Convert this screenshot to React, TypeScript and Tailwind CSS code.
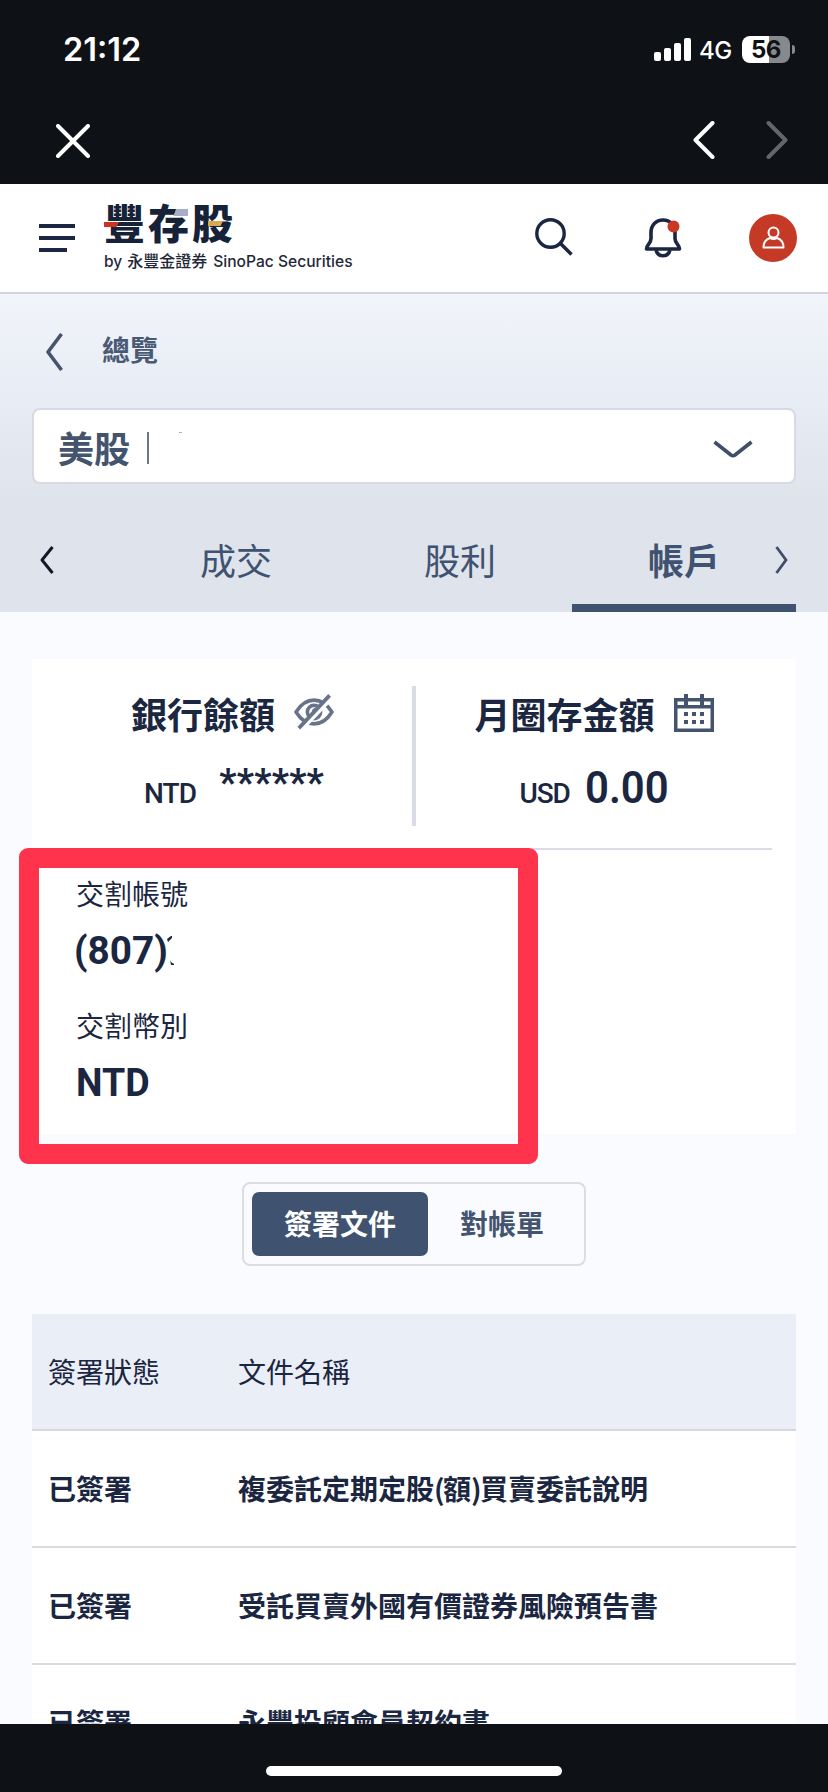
import type { ReactNode } from 'react';

const documents = [
  '複委託定期定股(額)買賣委託說明',
  '受託買賣外國有價證券風險預告書',
  '永豐投顧會員契約書',
];

const StatusBar = () => {
  return (
    <div className="h-[92px] flex items-start justify-between pl-[63px] pr-[33px]">
      <span className="mt-[30px] text-[32.5px] leading-[40px] font-semibold font-['Inter',sans-serif] text-white">21:12</span>
      <div className="mt-[36px] flex items-start">
        <svg width="38" height="27" viewBox="0 0 38 27" fill="#fff" className="mr-[7px]">
          <rect x="0" y="16" width="7" height="9" rx="2" />
          <rect x="10" y="12" width="7" height="13" rx="2" />
          <rect x="20" y="7" width="7" height="18" rx="2" />
          <rect x="30" y="2" width="7" height="23" rx="2" />
        </svg>
        <span className="w-[43px] text-[24px] leading-[30px] font-medium font-['Inter',sans-serif] text-white tracking-[-0.5px]">4G</span>
        <div className="w-[48px] h-[27px] rounded-[8px] bg-[linear-gradient(90deg,#fff_27px,#87898d_27px)] flex items-center justify-center">
          <span className="text-[24px] leading-[27px] font-bold font-['Inter',sans-serif] text-[#0e1116] tracking-[-0.5px]">56</span>
        </div>
        <div className="ml-[2px] mt-[9px] w-[3px] h-[9px] rounded-r-full bg-[#87898d]" />
      </div>
    </div>
  );
};

const BrowserBar = () => {
  return (
    <div className="h-[92px] flex items-start justify-between pl-[56px] pr-[40px]">
      <svg width="34" height="34" viewBox="0 0 34 34" className="mt-[32px]" stroke="#fff" strokeWidth="4" strokeLinecap="round">
        <path d="M2 2l30 30M32 2L2 32" />
      </svg>
      <div className="mt-[29px] flex gap-[51px]">
        <svg width="22" height="38" viewBox="0 0 22 38" fill="none" stroke="#fff" strokeWidth="4" strokeLinecap="round" strokeLinejoin="round">
          <path d="M19.500 2L2.500 19l17 17" />
        </svg>
        <svg width="22" height="38" viewBox="0 0 22 38" fill="none" stroke="#64666a" strokeWidth="4" strokeLinecap="round" strokeLinejoin="round">
          <path d="M2.500 2l17 17l-17 17" />
        </svg>
      </div>
    </div>
  );
};

const Logo = () => {
  return (
    <div className="ml-[29px] mt-[13px] w-[260px]">
      <div className="relative h-[48px] whitespace-nowrap text-[41px] leading-[48px] font-black tracking-[3px] text-[#152238]">
        豐存股
        {/* colour accents over the strokes */}
        <svg width="130" height="48" viewBox="0 0 130 48" className="absolute left-0 top-0">
          <path d="M0 25h15l-2.500 5H0z" fill="#cb3327" />
          <path d="M72 12H84v7H69.500z" fill="#a9aec8" />
          <path d="M104 24h15l-2.500 5h-12.500z" fill="#d9a94f" />
        </svg>
      </div>
      <p className="mt-[4px] flex items-baseline gap-[5px] whitespace-nowrap text-[16px] leading-[22px] font-medium text-[#1f2838]">
        <span className="font-['Inter',sans-serif] text-[15.5px]">by</span>
        <span>永豐金證券</span>
        <span className="ml-px font-['Inter',sans-serif] text-[15.6px]">SinoPac Securities</span>
      </p>
    </div>
  );
};

const Header = () => {
  return (
    <header className="h-[110px] bg-white border-b-2 border-[#d1d4db] flex items-start pl-[39px] pr-[31px]">
      <svg width="36" height="28" viewBox="0 0 36 28" fill="#1b2640" className="mt-[40px]">
        <rect width="36" height="4" />
        <rect y="12" width="36" height="4" />
        <rect y="24" width="28" height="4" />
      </svg>
      <Logo />
      <svg width="40" height="40" viewBox="0 0 40 40" fill="none" stroke="#1b2640" className="ml-auto mt-[33px]">
        <circle cx="16.500" cy="16.500" r="13.700" strokeWidth="3.400" />
        <path d="M26.500 26.500L37.500 37.500" strokeWidth="3.600" />
      </svg>
      <svg width="40" height="44" viewBox="0 0 40 44" fill="none" stroke="#1b2640" strokeWidth="3.600" className="ml-[70px] mt-[33px]">
        <path d="M2.500 32c0-4.500 4.500-5.500 4.500-10.500V15.500C7 8 12 3 19 3s12 5 12 12.500v6c0 5 4.500 6 4.500 10.500z" strokeLinejoin="round" />
        <path d="M12 33c1 4 3.500 5.800 7 5.800s6-1.800 7-5.800" />
        <circle cx="29.500" cy="9.500" r="6" fill="#c83823" stroke="none" />
      </svg>
      <div className="ml-[65px] mt-[30px] w-[48px] h-[48px] rounded-full bg-[#c53a26] flex items-center justify-center">
        <svg width="24" height="24" viewBox="0 0 24 24" fill="none" stroke="#fff" strokeWidth="2" strokeLinejoin="round">
          <circle cx="12.500" cy="6.500" r="5" />
          <path d="M2.500 21.500c0-6 3.500-8.500 6.500-9.500c2 1.200 5 1.200 7 0c3 1 6.500 3.500 6.500 9.500z" />
        </svg>
      </div>
    </header>
  );
};

const Tab = ({ label, active }: { label: string; active?: boolean }) => {
  return (
    <div
      className={
        active
          ? 'relative w-[224px] h-[128px] border-b-8 border-[#3f5270] text-center text-[36px] leading-[151px] font-bold text-[#3f5270]'
          : 'w-[224px] h-[128px] text-center text-[36px] leading-[151px] text-[#3f5270]'
      }
    >
      {label}
      {active && (
        <svg width="14" height="28" viewBox="0 0 14 28" fill="none" stroke="#3f4d68" strokeWidth="2.800" className="absolute right-[7px] top-[62px]">
          <path d="M1.500 1l9.500 13L1.500 27" />
        </svg>
      )}
    </div>
  );
};

const AccountHeader = () => {
  return (
    <section className="h-[318px] bg-[linear-gradient(180deg,#f1f4fa_0%,#e9edf5_28%,#dfe3ec_65%,#dfe3ec_100%)] px-[32px] flex flex-col">
      <div className="h-[114px] flex items-start pl-[13px]">
        <svg width="18" height="38" viewBox="0 0 18 38" fill="none" stroke="#44546f" strokeWidth="3.600" strokeLinejoin="round" className="mt-[39px]">
          <path d="M16.500 1L3 19l13.500 18" />
        </svg>
        <span className="ml-[39px] mt-[35px] text-[28px] leading-[40px] font-bold text-[#4a5a75]">總覽</span>
      </div>
      <div className="h-[76px] shrink-0 bg-white border-2 border-[#d7dae3] rounded-[8px] flex items-start pl-[24px] pr-[41px]">
        <span className="mt-[11px] text-[36px] leading-[52px] font-bold text-[#44546f]">美股</span>
        <div className="ml-[17px] mt-[22px] w-[2px] h-[32px] bg-[#6c7689]" />
        <div className="ml-[30px] mt-[22px] w-[3px] h-px bg-[#a9afbb]" />
        <svg width="40" height="20" viewBox="0 0 40 20" fill="none" stroke="#3f4f69" strokeWidth="3.600" strokeLinejoin="round" className="ml-auto mt-[30px]">
          <path d="M1.500 2L18 15q2 1.500 4 0L38.500 2" />
        </svg>
      </div>
      <nav className="flex">
        <div className="w-[92px] pl-[8px] pt-[62px]">
          <svg width="14" height="28" viewBox="0 0 14 28" fill="none" stroke="#111827" strokeWidth="3" strokeLinejoin="round">
            <path d="M12.500 1L2 14l10.500 13" />
          </svg>
        </div>
        <Tab label="成交" />
        <Tab label="股利" />
        <Tab label="帳戶" active />
      </nav>
    </section>
  );
};

const EyeOffIcon = () => {
  return (
    <svg width="40" height="36" viewBox="0 0 42 38" fill="none" stroke="#69748b" strokeWidth="3.800">
      <path d="M2 19C7 11 13 6.500 21 6.500S35 11 40 19c-5 8-11 12.500-19 12.500S7 27 2 19z" strokeLinejoin="round" />
      <circle cx="21" cy="19" r="7" />
      <path d="M20 19c0-2 1.500-3 3-3" strokeWidth="2.500" />
      <path d="M40 4L8.500 37" stroke="#fff" strokeWidth="4" />
      <path d="M37.500 1.500L5 36" strokeWidth="4" />
    </svg>
  );
};

const CalendarIcon = () => {
  return (
    <svg width="40" height="38" viewBox="0 0 40 38" fill="#44546f">
      <path d="M0 4h40v34H0zM3.500 7.500v3.500h33V7.500zM3.500 14.500v20h33v-20z" fillRule="evenodd" />
      <rect x="10" width="4" height="12" />
      <rect x="26" width="4" height="12" />
      {[10, 18, 26].map((x) => (
        <g key={x}>
          <rect x={x} y="18" width="4" height="4" />
          <rect x={x} y="26" width="4" height="4" />
        </g>
      ))}
    </svg>
  );
};

const Balance = ({ title, icon, children }: { title: string; icon: ReactNode; children: ReactNode }) => {
  return (
    <div className="flex-1 flex flex-col items-center">
      <div className="h-[52px] flex items-start">
        <h2 className="text-[36px] leading-[52px] font-bold">{title}</h2>
        <span className="ml-[19px] mt-[7px]">{icon}</span>
      </div>
      <div className="mt-[23px] h-[52px] flex items-baseline leading-[52px] font-['Roboto',sans-serif]">{children}</div>
    </div>
  );
};

const AccountCard = () => {
  return (
    <section className="relative mx-[32px] mt-[47px] h-[475px] bg-white text-[#1b2640]">
      <div className="h-[191px] mx-[24px] border-b-2 border-[#dadce6] pt-[27px] flex items-start">
        <div className="w-[356px] flex pt-px pr-[3px]">
          <Balance title="銀行餘額" icon={<EyeOffIcon />}>
            <span className="ml-[3px] text-[28px] font-medium tracking-[-0.8px]">NTD</span>
            <span className="ml-[23px] -translate-y-[7px] text-[38px] leading-[56px] font-bold tracking-[0.2px]">******</span>
          </Balance>
        </div>
        <div className="w-[4px] h-[140px] bg-[#d9dce5]" />
        <div className="w-[356px] flex pt-px">
          <Balance title="月圈存金額" icon={<CalendarIcon />}>
            <span className="ml-[4px] text-[28px] font-medium tracking-[-1.2px]">USD</span>
            <span className="ml-[16px] w-[87px] origin-left scale-x-[0.94] text-[44.5px] font-semibold">0.00</span>
          </Balance>
        </div>
      </div>
      <dl className="pl-[44px] pt-[23px]">
        <dt className="text-[28px] leading-[40px]">交割帳號</dt>
        <dd className="mt-[12px] h-[52px] flex font-['Roboto',sans-serif] text-[39.5px] leading-[52px] font-bold">
          <span className="-ml-[2px] w-[93px] origin-left scale-x-[0.98]">(807)</span>
          <svg width="8" height="30" viewBox="0 0 8 30" fill="#1b2640" className="mt-[11px]">
            <path d="M0 3l4-3h1v2L1 6zM3 24l1 2 3 2v1H4z" />
          </svg>
        </dd>
        <dt className="mt-[28px] text-[28px] leading-[40px]">交割幣別</dt>
        <dd className="mt-[12px] font-['Roboto',sans-serif] text-[39.5px] leading-[52px] font-bold">
          <span className="inline-block origin-left scale-x-[0.95]">NTD</span>
        </dd>
      </dl>
      {/* highlight frame drawn over the settlement account */}
      <div className="absolute left-[-13px] top-[189px] w-[519px] h-[316px] border-[20px] border-[#ff344c] rounded-[9px]" />
    </section>
  );
};

const Segmented = () => {
  return (
    <div className="mt-[48px] mx-auto w-[344px] h-[84px] border-2 border-[#dadde3] rounded-[8px] p-[8px] flex text-[28px] leading-[63px] font-bold text-center">
      <div className="w-[176px] h-[64px] rounded-[7px] bg-[#3f5270] text-white">簽署文件</div>
      <div className="w-[148px] text-[#44546f]">對帳單</div>
    </div>
  );
};

const DocumentTable = () => {
  return (
    <div className="mx-[32px] mt-[48px] text-[28px] leading-[115px] text-[#1b2640]">
      <div className="h-[117px] bg-[#eaeef7] border-b-2 border-[#d7d9df] flex pl-[16px]">
        <div className="w-[190px]">簽署狀態</div>
        <div>文件名稱</div>
      </div>
      {documents.map((name) => (
        <div key={name} className="h-[117px] bg-white border-b-2 border-[#d9dbdf] flex pl-[16px] font-bold">
          <div className="w-[190px]">已簽署</div>
          <div className="whitespace-nowrap">
            {name.split(/([()])/).map((part, i) =>
              part === '(' || part === ')' ? (
                <span key={i} className="tracking-[-1.6px]">{part}</span>
              ) : (
                part
              )
            )}
          </div>
        </div>
      ))}
    </div>
  );
};

const App = () => {
  return (
    <div className="w-[828px] h-[1792px] overflow-hidden flex flex-col bg-[#0e1116] font-['Noto_Sans_CJK_TC',sans-serif]">
      <StatusBar />
      <BrowserBar />
      <main className="h-[1540px] shrink-0 overflow-hidden bg-[#f9fbff]">
        <Header />
        <AccountHeader />
        <AccountCard />
        <Segmented />
        <DocumentTable />
      </main>
      <div className="mt-[42px] mx-auto w-[296px] h-[10px] shrink-0 rounded-full bg-white" />
    </div>
  );
};

export default App;
